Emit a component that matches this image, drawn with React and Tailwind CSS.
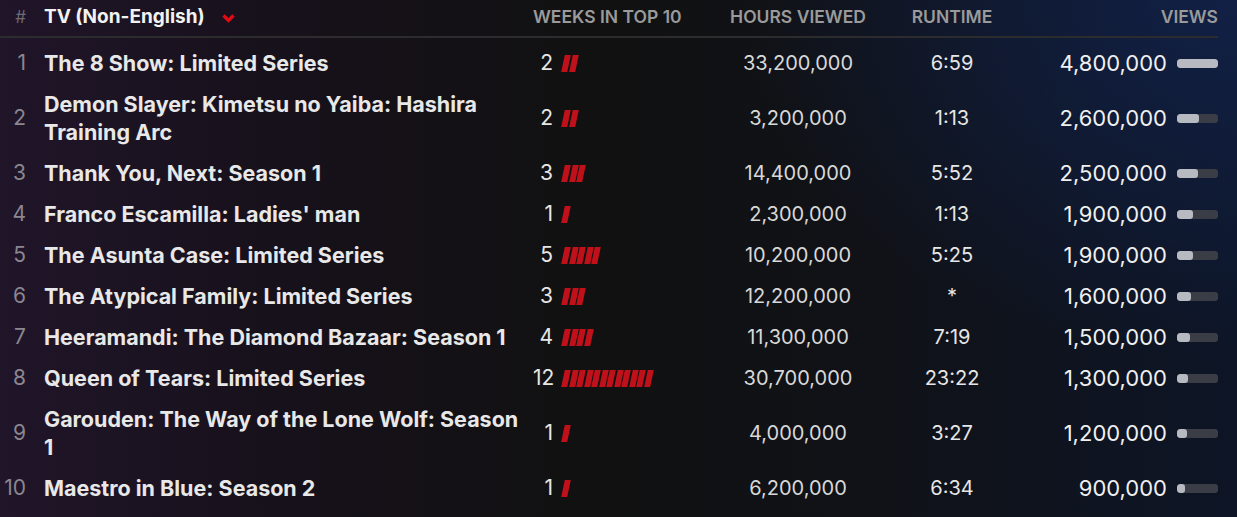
import React from 'react';

const rows = [
  { rank: 1, title: 'The 8 Show: Limited Series', weeks: 2, hours: '33,200,000', runtime: '6:59', views: 4800000 },
  { rank: 2, title: 'Demon Slayer: Kimetsu no Yaiba: Hashira Training Arc', weeks: 2, hours: '3,200,000', runtime: '1:13', views: 2600000 },
  { rank: 3, title: 'Thank You, Next: Season 1', weeks: 3, hours: '14,400,000', runtime: '5:52', views: 2500000 },
  { rank: 4, title: "Franco Escamilla: Ladies' man", weeks: 1, hours: '2,300,000', runtime: '1:13', views: 1900000 },
  { rank: 5, title: 'The Asunta Case: Limited Series', weeks: 5, hours: '10,200,000', runtime: '5:25', views: 1900000 },
  { rank: 6, title: 'The Atypical Family: Limited Series', weeks: 3, hours: '12,200,000', runtime: '*', views: 1600000 },
  { rank: 7, title: 'Heeramandi: The Diamond Bazaar: Season 1', weeks: 4, hours: '11,300,000', runtime: '7:19', views: 1500000 },
  { rank: 8, title: 'Queen of Tears: Limited Series', weeks: 12, hours: '30,700,000', runtime: '23:22', views: 1300000 },
  { rank: 9, title: 'Garouden: The Way of the Lone Wolf: Season 1', weeks: 1, hours: '4,000,000', runtime: '3:27', views: 1200000 },
  { rank: 10, title: 'Maestro in Blue: Season 2', weeks: 1, hours: '6,200,000', runtime: '6:34', views: 900000 },
];

const maxViews = 4800000;

const WeekBars = ({ count }) => (
  <div className="flex gap-[2px] ml-[10px]">
    {Array.from({ length: count }).map((_, i) => (
      <span key={i} className="block w-[5.5px] h-[17px] bg-[#c0111a] -skew-x-12" />
    ))}
  </div>
);

const ViewsBar = ({ views }) => (
  <div className="w-[41px] h-[9px] rounded-[3px] bg-[#3a3d46] overflow-hidden ml-[10px]">
    <div className="h-full rounded-[3px] bg-[#b8bac1]" style={{ width: `${(views / maxViews) * 100}%` }} />
  </div>
);

const App = () => {
  return (
    <div
      className="w-[1237px] h-[517px] overflow-hidden font-['Inter','Liberation_Sans',sans-serif] bg-[radial-gradient(ellipse_40%_70%_at_100%_0%,#112045_0%,transparent_100%),linear-gradient(90deg,#201529_0%,#17111b_22%,#111111_48%,#101218_72%,#0d1526_100%)]"
    >
      <div className="w-[1218px]">
        <div className="flex items-center h-[38px] pb-[1px] border-b-2 border-[#2c2c2e]">
          <div className="w-[26px] text-right text-[17px] text-[#6f6a72]">#</div>
          <div className="w-[507px] pl-[18px] flex items-center gap-[17px]">
            <span className="text-[19px] font-bold text-[#f2f2f2]">TV (Non-English)</span>
            <svg width="13" height="9" viewBox="0 0 13 9" className="mt-[1px]">
              <path d="M1.5 1.5 L6.5 6.5 L11.5 1.5" stroke="#e50914" strokeWidth="3.2" fill="none" />
            </svg>
          </div>
          <div className="w-[180px] text-[17.5px] font-semibold text-[#9a9a9a]">WEEKS IN TOP 10</div>
          <div className="w-[170px] text-center text-[17.5px] font-semibold text-[#9a9a9a]">HOURS VIEWED</div>
          <div className="w-[138px] text-center text-[17.5px] font-semibold text-[#9a9a9a]">RUNTIME</div>
          <div className="flex-1 text-right text-[17.5px] font-semibold text-[#9a9a9a]">VIEWS</div>
        </div>

        <div className="pt-[4.5px]">
          {rows.map((r) => (
            <div key={r.rank} className="flex items-center py-[6.5px] leading-[28px]">
              <div className="w-[26px] text-right text-[21px] text-[#8b8690]">{r.rank}</div>
              <div className="w-[507px] pl-[18px] pr-[10px] text-[21.5px] font-bold text-[#e8e8e8]">
                {r.title}
              </div>
              <div className="w-[180px] flex items-center">
                <span className="w-[20px] text-right text-[21px] text-[#e6e6e6]">{r.weeks}</span>
                <WeekBars count={r.weeks} />
              </div>
              <div className="w-[170px] text-center text-[20px] text-[#d8d8d8]">{r.hours}</div>
              <div className="w-[138px] text-center text-[20px] text-[#e6e6e6]">{r.runtime}</div>
              <div className="flex-1 flex items-center justify-end">
                <span className="text-[22px] text-[#f0f0f0]">{r.views.toLocaleString('en-US')}</span>
                <ViewsBar views={r.views} />
              </div>
            </div>
          ))}
        </div>
      </div>
    </div>
  );
};

export default App;
